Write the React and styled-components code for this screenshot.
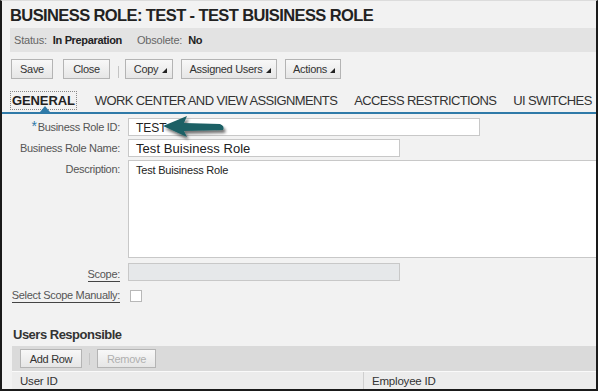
import React from "react";
import styled, { createGlobalStyle } from "styled-components";

const Global = createGlobalStyle`
  html, body { margin: 0; padding: 0; background: #ffffff; }
  body { font-family: "Liberation Sans", Arial, sans-serif; }
  * { box-sizing: border-box; }
`;

const Frame = styled.div`
  position: relative;
  width: 598px;
  height: 391px;
  background: #f2f2f2;
  border-left: 2px solid #1a1a1a;
  border-right: 2px solid #1a1a1a;
  border-bottom: 2px solid #1a1a1a;
  border-top: 1px solid #dcdcdc;
  overflow: hidden;
  color: #333;
`;

const Title = styled.h1`
  margin: 0;
  padding: 4px 0 0 8px;
  height: 27px;
  font-size: 16.5px;
  letter-spacing: -0.6px;
  font-weight: bold;
  color: #222;
  line-height: 20px;
  white-space: nowrap;
`;

const StatusBar = styled.div`
  margin-left: 8px;
  height: 24px;
  background: #e3e3e3;
  display: flex;
  align-items: center;
  padding-left: 4px;
  font-size: 11px;
  gap: 15px;
`;

const StatusItem = styled.span`
  color: #666;
  letter-spacing: -0.2px;
  b { color: #222; margin-left: 6px; letter-spacing: -0.35px; }
`;

const ButtonBar = styled.div`
  display: flex;
  align-items: flex-start;
  padding: 7px 0 0 9px;
  height: 33px;
  gap: 8px;
`;

const Button = styled.div`
  position: relative;
  flex: none;
  height: ${(p) => p.$h || 20}px;
  width: ${(p) => p.$w}px;
  margin-right: ${(p) => p.$mr || 0}px;
  padding-right: ${(p) => (p.$menu ? "6px" : "0")};
  border: 1px solid #b4b4b4;
  background: linear-gradient(#f8f8f8, #e6e6e6);
  font-size: 11px;
  letter-spacing: -0.3px;
  color: ${(p) => (p.$disabled ? "#b0b0b0" : "#333")};
  display: flex;
  align-items: center;
  justify-content: center;
  &::after {
    content: "";
    display: ${(p) => (p.$menu ? "block" : "none")};
    position: absolute;
    right: 5px;
    bottom: 5px;
    width: 0;
    height: 0;
    border-left: 5px solid transparent;
    border-bottom: 5px solid #222;
  }
`;

const Sep = styled.div`
  flex: none;
  align-self: center;
  width: 1px;
  height: 12px;
  background: #c4c4c4;
  margin-right: ${(p) => p.$mr || 0}px;
`;

const Tabs = styled.div`
  position: relative;
  display: flex;
  align-items: flex-start;
  height: 29px;
  padding: 6px 0 0 8px;
  border-bottom: 2px solid #2f7aa8;
  gap: 13px;
  font-size: 13px;
  line-height: 15px;
`;

const Tab = styled.div`
  position: relative;
  padding: 1px 1px;
  margin-right: ${(p) => p.$mr || 0}px;
  font-weight: ${(p) => (p.$active ? "bold" : "normal")};
  letter-spacing: ${(p) => (p.$active ? "-0.1px" : "-0.62px")};
  color: ${(p) => (p.$active ? "#222" : "#333")};
  border: 1px dotted ${(p) => (p.$active ? "#888" : "transparent")};
  white-space: nowrap;
  &::after {
    content: "";
    display: ${(p) => (p.$active ? "block" : "none")};
    position: absolute;
    left: 29px;
    bottom: -3px;
    border-left: 5px solid transparent;
    border-right: 5px solid transparent;
    border-bottom: 6px solid #2f7aa8;
  }
`;

const Form = styled.div`
  display: grid;
  grid-template-columns: 118px 1fr;
  column-gap: 8px;
  row-gap: 3px;
  padding-top: 4px;
  height: 187px;
`;

const Label = styled.div`
  text-align: right;
  color: #555;
  font-size: 11px;
  letter-spacing: -0.3px;
  white-space: nowrap;
  margin-top: ${(p) => p.$mt || 0}px;
  padding-top: ${(p) => p.$top || 3}px;
  span.req { color: #2f7aa8; font-size: 14px; line-height: 10px; margin-right: 1px; }
  u {
    text-decoration: none;
    border-bottom: 1px solid #444;
    padding-bottom: 1px;
  }
`;

const Input = styled.div`
  height: ${(p) => p.$h || 18}px;
  width: ${(p) => (p.$w ? p.$w + "px" : "auto")};
  margin-right: ${(p) => (p.$w ? 0 : -4)}px;
  margin-top: ${(p) => p.$mt || 0}px;
  background: ${(p) => (p.$disabled ? "#e6e8ea" : "#fff")};
  border: 1px solid #c8c8c8;
  padding: ${(p) => p.$pt || 2}px 7px 0;
  color: #222;
  font-size: ${(p) => p.$fs || 12}px;
  letter-spacing: ${(p) => p.$ls || 0}px;
  white-space: nowrap;
`;

const Check = styled.div`
  width: 12px;
  height: 12px;
  margin: 6px 0 0 2px;
  border: 1px solid #b8b8b8;
  background: #fff;
`;

const Section = styled.h2`
  margin: 0;
  padding: 26px 0 0 11px;
  height: 45px;
  font-size: 13px;
  line-height: 16px;
  letter-spacing: -0.5px;
  font-weight: bold;
  color: #333;
`;

const TableBar = styled.div`
  margin-left: 10px;
  height: 25px;
  background: #dadada;
  display: flex;
  align-items: center;
  padding-left: 8px;
  gap: 7px;
`;

const HeaderRow = styled.div`
  margin-left: 10px;
  height: 18px;
  display: grid;
  grid-template-columns: 351px 1fr;
  background: #ececec;
  border-top: 1px solid #fafafa;
  font-size: 11.5px;
  letter-spacing: -0.2px;
  color: #333;
`;

const HeadCell = styled.div`
  padding: 3px 0 0 8px;
  border-left: ${(p) => (p.$div ? "1px solid #cfcfcf" : "none")};
`;

const ArrowSvg = styled.svg`
  position: absolute;
  left: 148px;
  top: 107px;
`;

export default function App() {
  return (
    <>
      <Global />
      <Frame>
        <Title>BUSINESS ROLE: TEST - TEST BUISINESS ROLE</Title>
        <StatusBar>
          <StatusItem>Status:<b>In Preparation</b></StatusItem>
          <StatusItem>Obsolete:<b>No</b></StatusItem>
        </StatusBar>
        <ButtonBar>
          <Button $w={42} $mr={2}>Save</Button>
          <Button $w={47}>Close</Button>
          <Sep $mr={-2} />
          <Button $menu $w={48}>Copy</Button>
          <Button $menu $w={96}>Assigned Users</Button>
          <Button $menu $w={56}>Actions</Button>
        </ButtonBar>
        <Tabs>
          <Tab $active $mr={3}>GENERAL</Tab>
          <Tab>WORK CENTER AND VIEW ASSIGNMENTS</Tab>
          <Tab>ACCESS RESTRICTIONS</Tab>
          <Tab>UI SWITCHES</Tab>
        </Tabs>
        <Form>
          <Label><span className="req">*</span>Business Role ID:</Label>
          <Input $w={352} $fs={12}>TEST</Input>
          <Label>Business Role Name:</Label>
          <Input $w={272} $fs={13} $ls={0.05} $pt={1}>Test Buisiness Role</Input>
          <Label>Description:</Label>
          <Input $h={98} $fs={11} $ls={-0.2} $pt={3}>Test Buisiness Role</Input>
          <Label $mt={2} $top={5}><u>Scope:</u></Label>
          <Input $w={272} $mt={2} $disabled />
          <Label $top={5}><u>Select Scope Manually:</u></Label>
          <Check />
        </Form>
        <Section>Users Responsible</Section>
        <TableBar>
          <Button $w={62} $h={19}>Add Row</Button>
          <Sep />
          <Button $w={59} $h={19} $disabled>Remove</Button>
        </TableBar>
        <HeaderRow>
          <HeadCell>User ID</HeadCell>
          <HeadCell $div>Employee ID</HeadCell>
        </HeaderRow>
        <ArrowSvg width="90" height="40" viewBox="0 0 90 40">
          <defs>
            <filter id="sh" x="-20%" y="-40%" width="150%" height="200%">
              <feGaussianBlur in="SourceAlpha" stdDeviation="1.6" />
              <feOffset dx="2" dy="3" result="b" />
              <feComponentTransfer><feFuncA type="linear" slope="0.55" /></feComponentTransfer>
              <feMerge><feMergeNode /><feMergeNode in="SourceGraphic" /></feMerge>
            </filter>
          </defs>
          <path
            d="M13 18 L37 8 L34 15 L70 16 Q75 18 73 22 L34 23 L37 29 Z"
            fill="#1d6065"
            filter="url(#sh)"
          />
        </ArrowSvg>
      </Frame>
    </>
  );
}
